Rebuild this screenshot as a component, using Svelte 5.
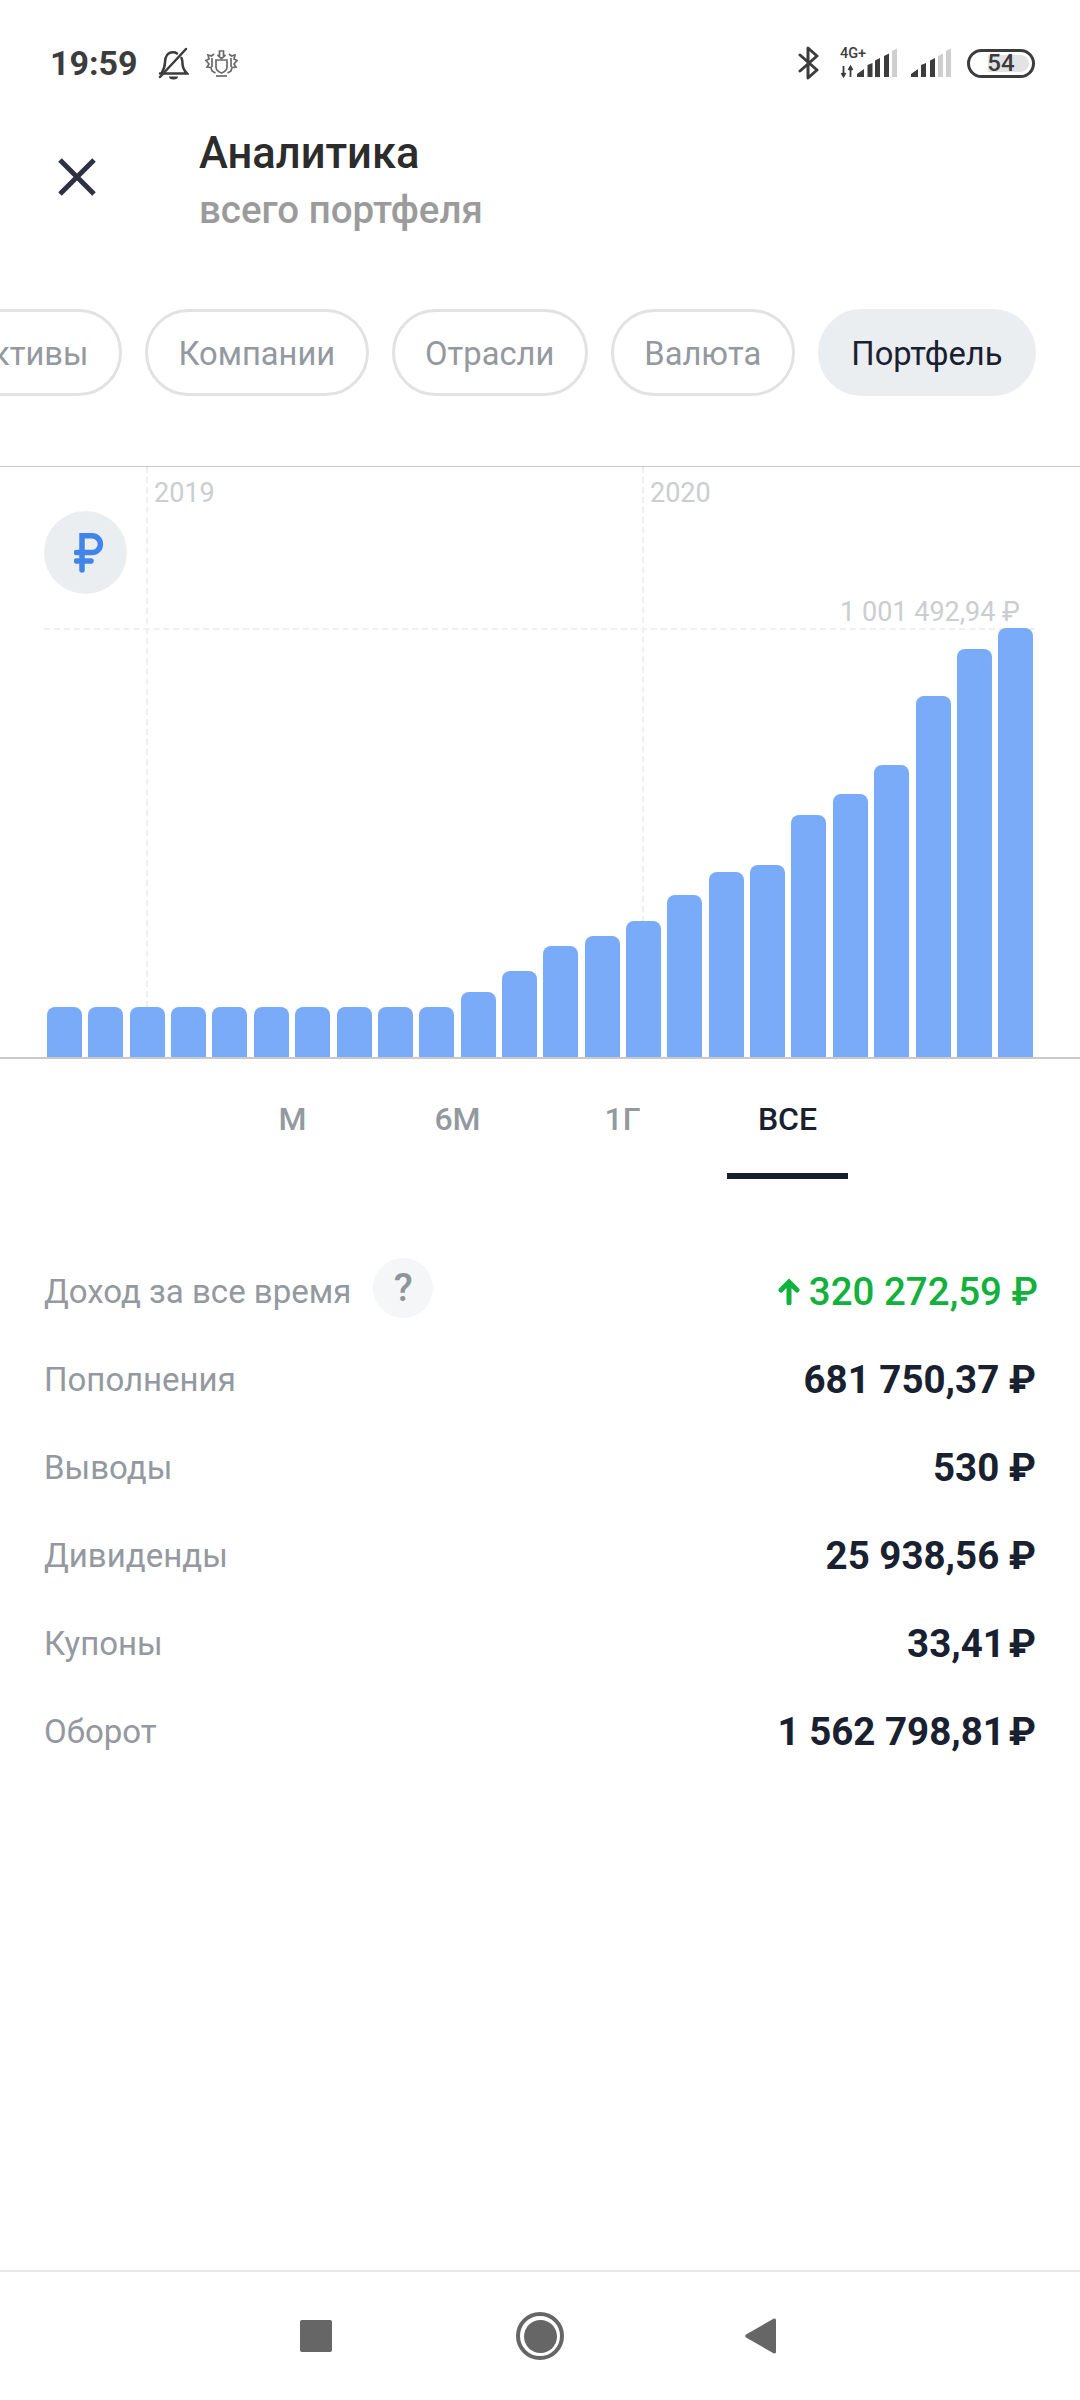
<script>
  const chips = [
    { label: 'Активы' },
    { label: 'Компании' },
    { label: 'Отрасли' },
    { label: 'Валюта' },
    { label: 'Портфель', active: true }
  ];

  const bars = [50, 50, 50, 50, 50, 50, 50, 50, 50, 50, 65, 86, 111, 121, 136, 162, 185, 192, 242, 263, 292, 361, 408, 429];
  const tabs = ['М', '6М', '1Г', 'ВСЕ'];

  const rows = [
    { label: 'Пополнения', value: '681 750,37 ₽' },
    { label: 'Выводы', value: '530 ₽' },
    { label: 'Дивиденды', value: '25 938,56 ₽' },
    { label: 'Купоны', value: '33,41\u200a₽' },
    { label: 'Оборот', value: '1 562 798,81\u200a₽' }
  ];
</script>

<div class="screen">
  <div class="status">
    <div class="status-left">
      <span class="time">19:59</span>
      <svg class="bell" viewBox="0 0 32 33" fill="none" stroke="#3c3c3c" stroke-width="2.500" stroke-linecap="round">
        <path d="M3 26.500h27c-3-3-4.500-6-4.500-10 0-2-.3-4-1-5.500"></path>
        <path d="M20 6.500c-1-.8-2.500-1.200-4-1.200-5 0-8 4-8 10 0 4-1 7-3.500 11"></path>
        <path d="M3 30 29 2"></path>
        <path d="M12 29.500h9a4.500 3 0 0 1-9 0z" fill="#3c3c3c" stroke="none"></path>
      </svg>
      <svg class="crest" viewBox="0 0 33 28" fill="none" stroke="#6a6a6a" stroke-width="1.700">
        <path d="M11 11h11v7c0 3-2.500 5-5.500 6-3-1-5.500-3-5.500-6z"></path>
        <path d="M14.500 8V2h4v6M12.500 6l4 3.500 4-3.500"></path>
        <path d="M9 5 6.500 7 3 6l1 4-3 1.500L4 15l-2 3 4 .5 1 3.500 3.500 2"></path>
        <path d="M24 5l2.500 2L30 6l-1 4 3 1.500L29 15l2 3-4 .5-1 3.500-3.500 2"></path>
        <path d="M7 9v9M26 9v9"></path>
        <path d="M11 27h11"></path>
      </svg>
    </div>
    <div class="status-right">
      <svg class="bt" viewBox="0 0 22 34" fill="none" stroke="#3c3c3c" stroke-width="3" stroke-linejoin="round" stroke-linecap="round">
        <path d="M2 9 19 24 10 32V2l9 8L2 25"></path>
      </svg>
      <svg class="signal" viewBox="0 0 58 30">
        <text x="0" y="10" class="net">4G+</text>
        <path d="M3.500 18v10M1.500 25l2 3.500 2-3.500M10.500 29V19M8.500 22l2-3.500 2 3.500" stroke="#3c3c3c" stroke-width="1.800" fill="none"></path>
        <path d="M17 29v-3l7-5v8zM27.500 29V17l5-2v14zM35 29V12.500l5-2.500v19zM44 29V8l5-2.500V29z" fill="#3c3c3c"></path>
        <path d="M52 29V3l5-2.500V29z" fill="#cfcfcf"></path>
      </svg>
      <svg class="signal2" viewBox="0 0 40 30">
        <path d="M0 29v-3l7-5v8zM10 29V17l5-2v14zM19 29V12.500l5-2.500v19z" fill="#3c3c3c"></path>
        <path d="M27 29V8l5-2.500V29zM35 29V3l5-2.500V29z" fill="#cfcfcf"></path>
      </svg>
      <div class="battery"><span>54</span></div>
    </div>
  </div>

  <header class="header">
    <svg class="close" viewBox="0 0 38 38" stroke="#2d3142" stroke-width="5">
      <path d="M2 2 36 36M36 2 2 36"></path>
    </svg>
    <div class="titles">
      <div class="title">Аналитика</div>
      <div class="subtitle">всего портфеля</div>
    </div>
  </header>

  <div class="chips">
    {#each chips as chip}
      <div class="chip" class:active={chip.active}>{chip.label}</div>
    {/each}
  </div>

  <section class="chart">
    <span class="vline first"></span>
    <span class="vline second"></span>
    <span class="hline"></span>
    <span class="year first">2019</span>
    <span class="year second">2020</span>
    <span class="max">1 001 492,94 ₽</span>
    <div class="currency">
      <svg viewBox="0 0 30 40" fill="none" stroke="#4285e8" stroke-width="5.500" stroke-linecap="round">
        <path d="M8 37V2.750h10a8.400 8.400 0 0 1 0 16.800H2.500M2.500 28H17"></path>
      </svg>
    </div>
    {#each bars as h}
      <div class="bar" style="height: {h}px"></div>
    {/each}
  </section>

  <nav class="tabs">
    {#each tabs as tab}
      <div class="tab" class:selected={tab === 'ВСЕ'}>{tab}</div>
    {/each}
  </nav>

  <div class="rows">
    <div class="row">
      <div class="label-wrap">
        <span class="label">Доход за все время</span>
        <span class="help">?</span>
      </div>
      <span class="value green">
        <svg class="arrow" viewBox="0 0 22 27" fill="none" stroke="#12b03c" stroke-width="5" stroke-linecap="round">
          <path d="M11 25V4M3 12l8-8 8 8"></path>
        </svg>
        320 272,59 ₽
      </span>
    </div>
    {#each rows as row}
      <div class="row">
        <span class="label">{row.label}</span>
        <span class="value">{row.value}</span>
      </div>
    {/each}
  </div>

  <div class="navbar">
    <div class="nav-square"></div>
    <div class="nav-home"><span></span></div>
    <svg class="nav-back" viewBox="0 0 31 36" fill="#666">
      <path d="M1 16.500 28.500.8c1-.6 2.500 0 2.500 1.300v31.800c0 1.300-1.500 1.900-2.500 1.300L1 19.500c-1-.7-1-2.300 0-3z"></path>
    </svg>
  </div>
</div>

<style>
  :global(body) {
    margin: 0;
    background: #fff;
  }

  .screen {
    position: relative;
    width: 1080px;
    height: 2400px;
    overflow: hidden;
    font-family: Roboto, sans-serif;
    display: flex;
    flex-direction: column;
  }

  .status {
    height: 46px;
    padding: 40px 45px 0 50px;
    display: flex;
    justify-content: space-between;
    align-items: center;
  }

  .status-left,
  .status-right {
    display: flex;
    align-items: center;
  }

  .time {
    font-size: 34px;
    font-weight: 700;
    color: #3c3c3c;
    width: 107px;
  }

  .bell {
    width: 32px;
    height: 33px;
  }

  .crest {
    width: 33px;
    height: 28px;
    margin-left: 16px;
  }

  .bt {
    width: 22px;
    height: 34px;
  }

  .signal {
    width: 58px;
    height: 30px;
    margin-left: 20px;
    overflow: visible;
  }

  .net {
    font-size: 14.5px;
    font-weight: 500;
    fill: #3c3c3c;
  }

  .signal2 {
    width: 40px;
    height: 30px;
    margin-left: 13px;
  }

  .battery {
    position: relative;
    width: 68px;
    height: 29px;
    margin-left: 16px;
    box-sizing: border-box;
    border: 3px solid #3c3c3c;
    border-radius: 15px;
    display: flex;
    align-items: center;
    justify-content: center;
    font-size: 24px;
    font-weight: 500;
    color: #3c3c3c;
  }

  .battery::before {
    content: '';
    position: absolute;
    left: 18px;
    right: 3px;
    top: 3px;
    bottom: 3px;
    border-radius: 0 10px 10px 0;
    background: #e3e3e3;
  }

  .battery span {
    position: relative;
  }

  .header {
    display: flex;
    align-items: flex-start;
    padding: 40px 0 0 58px;
  }

  .close {
    width: 38px;
    height: 38px;
    flex: none;
    margin-top: 32px;
  }

  .titles {
    margin-left: 103px;
  }

  .title {
    font-size: 43.5px;
    font-weight: 500;
    line-height: 55px;
    color: #2c2c2c;
  }

  .subtitle {
    font-size: 38.5px;
    font-weight: 500;
    line-height: 58px;
    color: #9b9b9b;
  }

  .chips {
    margin-top: 70px;
    padding-right: 44px;
    display: flex;
    justify-content: flex-end;
    gap: 23px;
  }

  .chip {
    flex: none;
    height: 87px;
    box-sizing: border-box;
    padding: 3px 30.5px 0;
    border: 3px solid #e2e2e2;
    border-radius: 44px;
    display: flex;
    align-items: center;
    font-size: 32.7px;
    color: #93999f;
  }

  .chip.active {
    background: #ebeef0;
    border-color: #ebeef0;
    color: #192130;
  }

  .chart {
    position: relative;
    height: 590px;
    margin-top: 70px;
    padding-left: 47px;
    border-top: 1px solid #c9c9c9;
    border-bottom: 2px solid #c9c9c9;
    display: flex;
    align-items: flex-end;
    gap: 6.36px;
  }

  .vline {
    position: absolute;
    top: 0;
    height: 540px;
    border-left: 2px dashed #eeeff1;
  }

  .vline.first {
    left: 146px;
  }

  .vline.second {
    left: 642px;
    height: 455px;
  }

  .hline {
    position: absolute;
    left: 44px;
    right: 45px;
    top: 161px;
    border-top: 2px dashed #eeeff1;
  }

  .year,
  .max {
    position: absolute;
    font-size: 27px;
    line-height: 32px;
    color: #cbcdd0;
  }

  .year {
    top: 10px;
  }

  .year.first {
    left: 154px;
  }

  .year.second {
    left: 650px;
  }

  .max {
    right: 60px;
    top: 129px;
  }

  .currency {
    position: absolute;
    left: 44px;
    top: 44px;
    width: 83px;
    height: 83px;
    border-radius: 50%;
    background: #ebeef0;
    display: flex;
    align-items: center;
    justify-content: center;
  }

  .currency svg {
    width: 30px;
    height: 40px;
    margin-left: 6px;
  }

  .bar {
    position: relative;
    flex: none;
    width: 35px;
    background: #7aabf8;
    border-radius: 8px 8px 0 0;
  }

  .tabs {
    display: flex;
    gap: 44px;
    padding-left: 232px;
    height: 120px;
  }

  .tab {
    width: 121px;
    box-sizing: border-box;
    padding-top: 40px;
    line-height: 40px;
    text-align: center;
    font-size: 32px;
    font-weight: 500;
    color: #93999f;
  }

  .tab.selected {
    color: #192130;
    border-bottom: 6px solid #16202c;
  }

  .rows {
    margin-top: 68px;
    padding: 0 44px;
  }

  .row {
    height: 88px;
    display: flex;
    align-items: center;
    justify-content: space-between;
  }

  .label-wrap {
    display: flex;
    align-items: center;
    gap: 22px;
  }

  .label {
    font-size: 33px;
    color: #93999f;
  }

  .help {
    width: 60px;
    height: 60px;
    margin-top: -6px;
    border-radius: 50%;
    background: #f5f6f8;
    color: #8f959b;
    font-size: 39px;
    font-weight: 500;
    display: flex;
    align-items: center;
    justify-content: center;
  }

  .value {
    font-size: 38.5px;
    font-weight: 700;
    color: #192130;
    display: flex;
    align-items: center;
    gap: 9px;
  }

  .value.green {
    color: #12b03c;
    font-weight: 500;
    margin-right: -2px;
  }

  .arrow {
    width: 22px;
    height: 27px;
  }

  .navbar {
    position: absolute;
    left: 0;
    right: 0;
    bottom: 0;
    height: 130px;
    box-sizing: border-box;
    padding-left: 300px;
    border-top: 2px solid #e8e8e8;
    display: flex;
    align-items: center;
  }

  .nav-square {
    width: 32px;
    height: 32px;
    border-radius: 2px;
    background: #666;
  }

  .nav-home {
    width: 48px;
    height: 48px;
    margin-left: 184px;
    box-sizing: border-box;
    border: 4px solid #666;
    border-radius: 50%;
    display: flex;
    align-items: center;
    justify-content: center;
  }

  .nav-home span {
    width: 33px;
    height: 33px;
    border-radius: 50%;
    background: #666;
  }

  .nav-back {
    width: 31px;
    height: 36px;
    margin-left: 181px;
  }
</style>
